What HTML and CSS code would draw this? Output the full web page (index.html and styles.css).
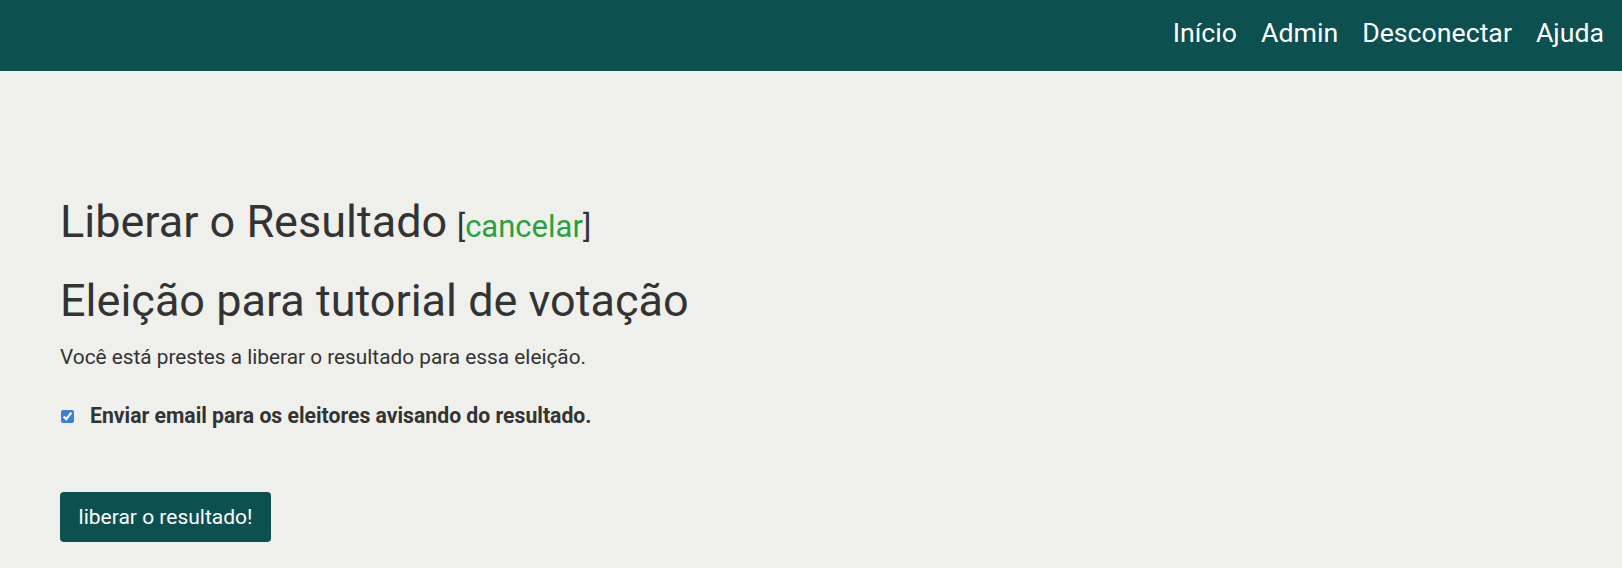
FILE: index.html
```html
<!DOCTYPE html>
<html lang="pt">
<head>
<meta charset="utf-8">
<title>Liberar o Resultado</title>
<link rel="stylesheet" href="styles.css">
</head>
<body>
<header class="topbar">
  <nav class="nav">
    <a href="#" class="nav-link">Início</a>
    <a href="#" class="nav-link">Admin</a>
    <a href="#" class="nav-link">Desconectar</a>
    <a href="#" class="nav-link">Ajuda</a>
  </nav>
</header>
<main class="content">
  <h1 class="title">Liberar o Resultado<span class="small"> [<a href="#" class="cancel">cancelar</a>]</span></h1>
  <h2 class="subtitle">Eleição para tutorial de votação</h2>
  <p class="lead">Você está prestes a liberar o resultado para essa eleição.</p>
  <label class="check-row">
    <input type="checkbox" class="check" checked>
    <span class="check-label">Enviar email para os eleitores avisando do resultado.</span>
  </label>
  <button class="btn" type="button">liberar o resultado!</button>
</main>
</body>
</html>
```
FILE: styles.css
```css
html, body {
  margin: 0;
  padding: 0;
}
body {
  background: #eff0eb;
  color: #333333;
  font-family: Roboto, "Noto Sans", sans-serif;
  font-size: 21px;
  height: 568px;
  overflow: hidden;
}
.topbar {
  background: #0d5050;
  height: 71px;
  display: flex;
  justify-content: flex-end;
  align-items: center;
  padding: 0 18px;
}
.nav {
  display: flex;
  gap: 24px;
  padding-bottom: 4px;
}
.nav-link {
  color: #ffffff;
  text-decoration: none;
  font-size: 26.7px;
  line-height: 1;
}
.content {
  padding: 124px 60px 0 60px;
  display: flex;
  flex-direction: column;
  align-items: flex-start;
}
.title {
  margin: 0;
  font-size: 45px;
  font-weight: 400;
  line-height: 1.2;
}
.small {
  font-size: 31px;
  padding-left: 2px;
}
.cancel {
  color: #28a13f;
  text-decoration: none;
}
.subtitle {
  margin: 25px 0 0 0;
  font-size: 45px;
  font-weight: 400;
  line-height: 1.2;
}
.lead {
  margin: 14px 0 0 0;
  font-size: 20.8px;
  line-height: 30px;
}
.check-row {
  margin-top: 29px;
  display: flex;
  align-items: center;
  gap: 16px;
}
.check {
  margin: 0 0 0 1px;
  width: 13px;
  height: 13px;
  accent-color: #3b7fd6;
}
.check-label {
  font-weight: 700;
  font-size: 21.2px;
  line-height: 30px;
}
.btn {
  margin-top: 61px;
  background: #0d5050;
  color: #ffffff;
  border: none;
  border-radius: 4px;
  font-family: inherit;
  font-size: 21px;
  padding: 0 18px;
  height: 50px;
  width: 211px;
}
```
